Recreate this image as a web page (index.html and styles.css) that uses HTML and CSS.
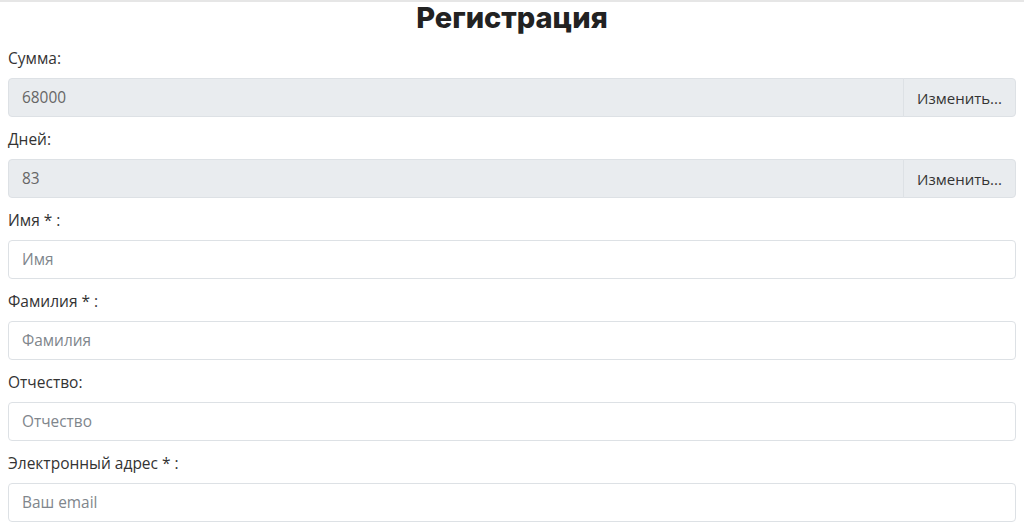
FILE: index.html
```html
<!DOCTYPE html>
<html lang="ru">
<head>
<meta charset="UTF-8">
<meta name="viewport" content="width=device-width, initial-scale=1.0">
<title>Регистрация</title>
<link rel="stylesheet" href="styles.css">
</head>
<body>
<div class="topline"></div>
<div class="container">
    <h2>Регистрация</h2>

    <form id="regForm">
        <div class="group">
            <label for="sum">Сумма:</label>
            <div class="input-group">
                <input type="text" id="sum" value="68000" readonly>
                <button type="button">Изменить...</button>
            </div>
        </div>

        <div class="group">
            <label for="days">Дней:</label>
            <div class="input-group">
                <input type="text" id="days" value="83" readonly>
                <button type="button">Изменить...</button>
            </div>
        </div>

        <div class="group">
            <label for="name">Имя * :</label>
            <input type="text" id="name" placeholder="Имя">
        </div>

        <div class="group">
            <label for="surname">Фамилия * :</label>
            <input type="text" id="surname" placeholder="Фамилия">
        </div>

        <div class="group">
            <label for="patronymic">Отчество:</label>
            <input type="text" id="patronymic" placeholder="Отчество">
        </div>

        <div class="group">
            <label for="email">Электронный адрес * :</label>
            <input type="text" id="email" placeholder="Ваш email">
        </div>
    </form>
</div>
</body>
</html>
```

FILE: styles.css
```css
body {
    margin: 0;
    font-family: "Open Sans", Arial, sans-serif;
    font-size: 15.5px;
    color: #212529;
    background-color: #fff;
}
.topline {
    height: 2px;
    background-color: #e6e6e6;
}
.container {
    padding: 0 8px;
}
h2 {
    margin: 0;
    height: 44px;
    line-height: 31px;
    text-align: center;
    font-family: Inter, "Liberation Sans", sans-serif;
    font-weight: 800;
    font-size: 29px;
    color: #222;
}
.group {
    margin-bottom: 10px;
}
label {
    display: block;
    line-height: 24px;
    margin-bottom: 8px;
    color: #333;
}
.input-group {
    display: flex;
}
input[type="text"] {
    width: 100%;
    height: 39px;
    padding: 6px 13px;
    border: 1px solid #dde1e5;
    border-radius: 4px;
    box-sizing: border-box;
    font-family: "Open Sans", Arial, sans-serif;
    font-size: 15.4px;
    color: #666;
    background-color: #fff;
}
input::placeholder {
    color: #80868c;
}
input[readonly] {
    background-color: #e9ecef;
}
.input-group input[type="text"] {
    flex: 1;
    border-radius: 4px 0 0 4px;
}
.input-group button {
    flex: none;
    width: 113px;
    height: 39px;
    margin-left: -1px;
    border: 1px solid #dde1e5;
    border-radius: 0 4px 4px 0;
    background-color: #e9ecef;
    font-family: "Open Sans", Arial, sans-serif;
    font-size: 15px;
    color: #333;
    cursor: pointer;
}
```
